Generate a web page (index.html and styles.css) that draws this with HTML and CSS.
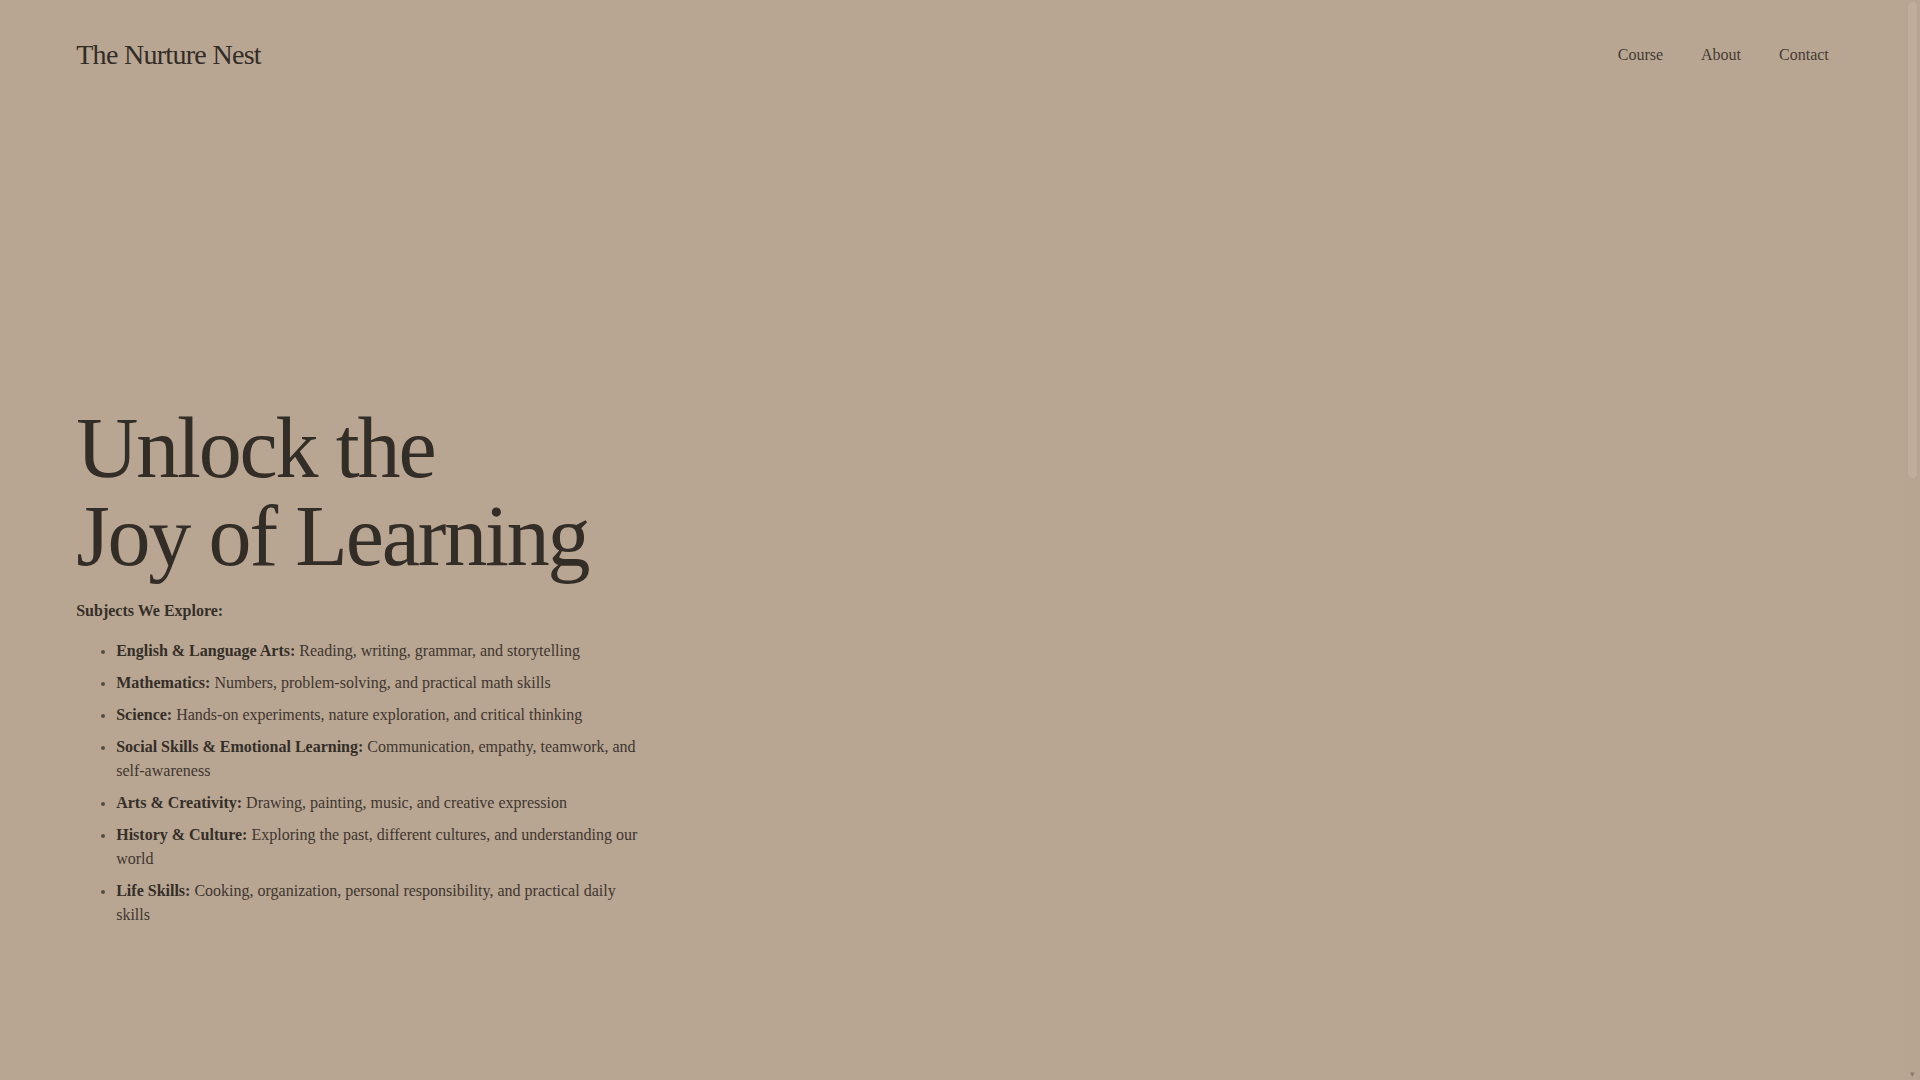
FILE: index.html
```html
<!DOCTYPE html>
<html lang="en">
<head>
<meta charset="utf-8">
<title>The Nurture Nest</title>
<link rel="stylesheet" href="styles.css">
</head>
<body>
<div class="page">
  <header class="site-header">
    <a class="logo" href="#">The Nurture Nest</a>
    <nav class="main-nav">
      <a href="#course">Course</a>
      <a href="#about">About</a>
      <a href="#contact">Contact</a>
    </nav>
  </header>
  <main>
    <section class="hero">
      <div class="hero-content">
        <h1 class="hero-title">Unlock the<br>Joy of Learning</h1>
        <p class="subjects-label">Subjects We Explore:</p>
        <ul class="subjects">
          <li><strong>English &amp; Language Arts:</strong> Reading, writing, grammar, and storytelling</li>
          <li><strong>Mathematics:</strong> Numbers, problem-solving, and practical math skills</li>
          <li><strong>Science:</strong> Hands-on experiments, nature exploration, and critical thinking</li>
          <li><strong>Social Skills &amp; Emotional Learning:</strong> Communication, empathy, teamwork, and self-awareness</li>
          <li><strong>Arts &amp; Creativity:</strong> Drawing, painting, music, and creative expression</li>
          <li><strong>History &amp; Culture:</strong> Exploring the past, different cultures, and understanding our world</li>
          <li><strong>Life Skills:</strong> Cooking, organization, personal responsibility, and practical daily skills</li>
        </ul>
      </div>
    </section>
    <section class="next-section" id="course"></section>
  </main>
</div>
<div class="fake-scrollbar" aria-hidden="true">
  <div class="fake-thumb"></div>
  <div class="fake-arrow">&#9662;</div>
</div>
</body>
</html>
```

FILE: styles.css
```css
html, body {
  margin: 0;
  padding: 0;
}

body {
  background: #b9a692;
  color: #352f29;
  font-family: "Liberation Serif", "Times New Roman", serif;
  font-size: 16px;
  line-height: 1.5;
}

.page {
  margin-right: 15px;
}

a {
  color: inherit;
  text-decoration: none;
}

.site-header {
  display: flex;
  align-items: center;
  justify-content: space-between;
  padding: 38px 4% 37px;
}

.logo {
  font-size: 28px;
  line-height: 1.2;
  letter-spacing: -0.025em;
  color: #322c26;
}

.main-nav {
  display: flex;
  gap: 38px;
}

.main-nav a {
  font-size: 16px;
  line-height: 1.5;
  color: #433a33;
}

.hero {
  padding: 295px 4% 140px;
}

.hero-content {
  max-width: 576px;
}

.hero-title {
  margin: 0 0 18px;
  font-weight: 400;
  font-size: 86px;
  line-height: 1.03;
  letter-spacing: -0.025em;
  color: #332d27;
}

.subjects-label {
  margin: 0 0 16px;
  font-weight: 700;
}

.subjects {
  margin: 0;
  padding-left: 40px;
  color: #3d352f;
}

.subjects li {
  margin-bottom: 8px;
}

.subjects li::marker {
  font-size: 13px;
  color: #564c44;
}

.subjects strong {
  color: #342e28;
}

.next-section {
  height: 1290px;
}

.fake-scrollbar {
  position: fixed;
  top: 0;
  right: 0;
  width: 15px;
  height: 100vh;
  background: #b8a591;
  display: flex;
  flex-direction: column;
  align-items: center;
}

.fake-thumb {
  margin-top: 2px;
  width: 9px;
  height: 476px;
  border-radius: 5px;
  background: #c0ae9c;
}

.fake-arrow {
  margin-top: auto;
  font-size: 9px;
  line-height: 12px;
  color: #8c7b6c;
}
```
